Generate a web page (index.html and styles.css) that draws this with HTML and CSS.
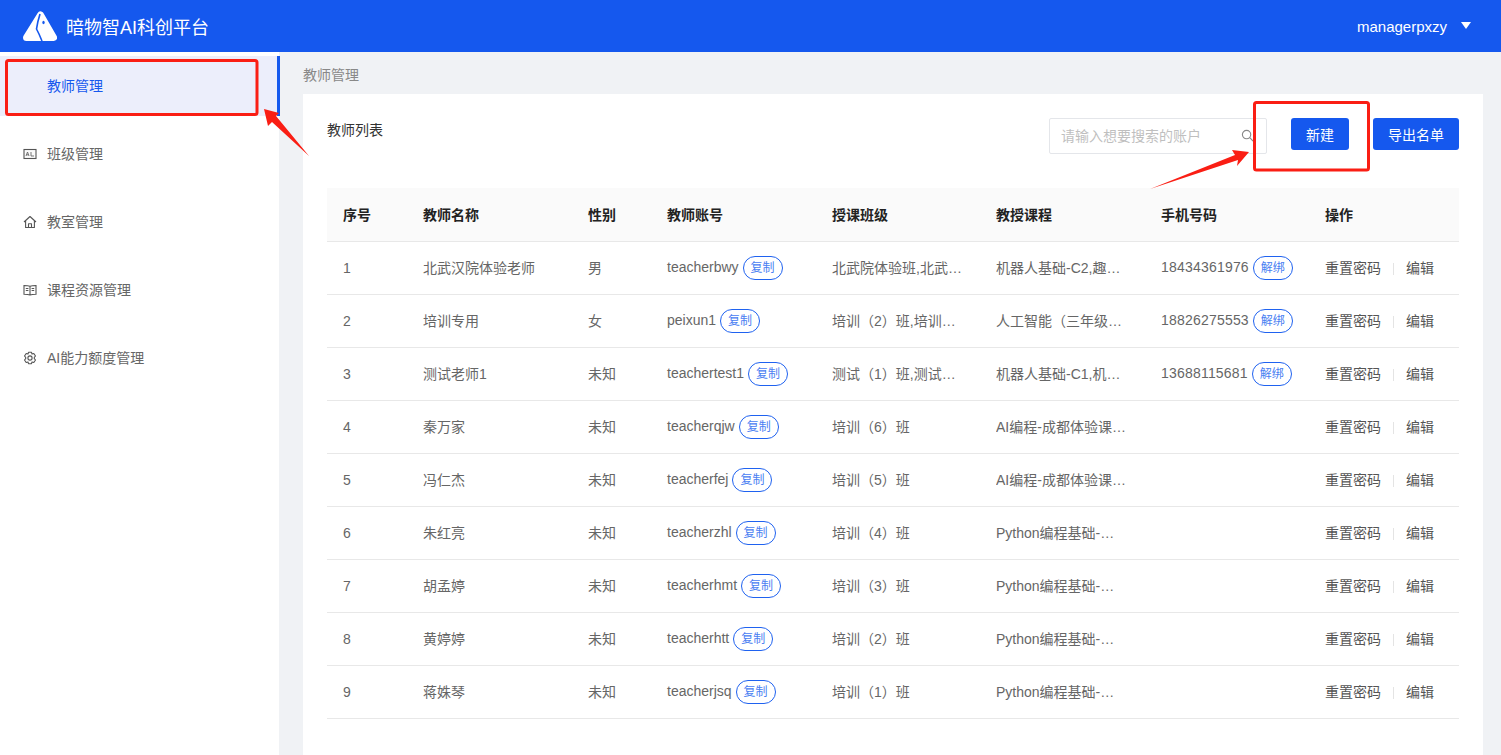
FILE: index.html
```html
<!DOCTYPE html>
<html lang="zh-CN">
<head>
    <meta charset="UTF-8">
    <title>暗物智AI科创平台</title>
    <link rel="stylesheet" href="styles.css">
</head>
<body>

    <!-- Header -->
    <header class="topbar">
        <div class="brand">
            <svg class="logo" viewBox="0 0 34 30">
                <path d="M17.500 4 30.500 26.500H3.500Z" fill="#fff" stroke="#fff" stroke-width="7" stroke-linejoin="round"/>
                <path d="M17 3 14.800 11 13.500 18 16 23 19 30" fill="none" stroke="#1558ee" stroke-width="1.600"/>
                <ellipse cx="20.500" cy="11.500" rx="1.200" ry="1.800" fill="#1558ee"/>
            </svg>
            <span class="brand-name">暗物智AI科创平台</span>
        </div>
        <div class="user">
            <span>managerpxzy</span>
            <i class="caret"></i>
        </div>
    </header>

    <div class="main">
        <!-- Sidebar -->
        <nav class="sidebar">
            <a class="menu-item active">教师管理</a>
            <a class="menu-item">
                <svg class="menu-icon" viewBox="0 0 14 14"><rect x="1" y="2.500" width="12" height="9" fill="#fafafa" stroke="#555" stroke-width="1.100"/><path d="M3 9 4.500 5 6 9M3.600 7.800H5.400M8 5V9H11" fill="none" stroke="#666" stroke-width=".9"/></svg>
                班级管理
            </a>
            <a class="menu-item">
                <svg class="menu-icon" viewBox="0 0 14 14"><path d="M1 7 7 1.500 13 7M2.600 6V12.500H11.400V6M5.500 12.500V8.800H8.500V12.500" fill="none" stroke="#555" stroke-width="1.100" stroke-linejoin="round"/></svg>
                教室管理
            </a>
            <a class="menu-item">
                <svg class="menu-icon" viewBox="0 0 14 14"><path d="M7 3.200C5.500 2.600 3 2.500 1 2.500V11.200C3 11.200 5.500 11.300 7 12 8.500 11.300 11 11.200 13 11.200V2.500C11 2.500 8.500 2.600 7 3.200ZM7 3.200V12M2.800 5.500H5.400M2.800 7.500H5.400M8.600 5.500H11.200M8.600 7.500H11.200" fill="none" stroke="#555" stroke-width="1.100"/></svg>
                课程资源管理
            </a>
            <a class="menu-item">
                <svg class="menu-icon" viewBox="0 0 14 14"><path d="M5.500 1.300H8.500L9 3 10.800 2.500 12.500 5 11.300 6.300V7.700L12.500 9 10.800 11.500 9 11 8.500 12.700H5.500L5 11 3.200 11.500 1.500 9 2.700 7.700V6.300L1.500 5 3.200 2.500 5 3Z" fill="none" stroke="#555" stroke-width="1.100" stroke-linejoin="round"/><circle cx="7" cy="7" r="2.100" fill="none" stroke="#555" stroke-width="1.100"/></svg>
                AI能力额度管理
            </a>
        </nav>

        <!-- Content -->
        <section class="content">
            <div class="breadcrumb">教师管理</div>
            <div class="card">
                <div class="toolbar">
                    <h2 class="card-title">教师列表</h2>
                    <div class="actions">
                        <div class="search">
                            <span class="placeholder">请输入想要搜索的账户</span>
                            <svg class="search-icon" viewBox="0 0 14 14"><circle cx="6" cy="6" r="4.500" fill="none" stroke="#888" stroke-width="1.200"/><path d="M9.400 9.400 13 13" stroke="#888" stroke-width="1.200"/></svg>
                        </div>
                        <button class="btn btn-new">新建</button>
                        <button class="btn">导出名单</button>
                    </div>
                </div>

                <table class="teacher-table">
                    <thead>
                        <tr>
                            <th class="col-no">序号</th>
                            <th class="col-name">教师名称</th>
                            <th class="col-sex">性别</th>
                            <th class="col-account">教师账号</th>
                            <th class="col-class">授课班级</th>
                            <th class="col-course">教授课程</th>
                            <th class="col-phone">手机号码</th>
                            <th>操作</th>
                        </tr>
                    </thead>
                    <tbody>
                        <tr>
                            <td>1</td><td>北武汉院体验老师</td><td>男</td>
                            <td class="latin">teacherbwy<span class="pill">复制</span></td>
                            <td><span class="clip">北武院体验班,北武院体验班</span></td>
                            <td><span class="clip">机器人基础-C2,趣味编程</span></td>
                            <td class="latin phone">18434361976<span class="pill">解绑</span></td>
                            <td class="ops"><a>重置密码</a><i class="sep"></i><a>编辑</a></td>
                        </tr>
                        <tr>
                            <td>2</td><td>培训专用</td><td>女</td>
                            <td class="latin">peixun1<span class="pill">复制</span></td>
                            <td><span class="clip">培训（2）班,培训（1）班</span></td>
                            <td><span class="clip">人工智能（三年级）上册</span></td>
                            <td class="latin phone">18826275553<span class="pill">解绑</span></td>
                            <td class="ops"><a>重置密码</a><i class="sep"></i><a>编辑</a></td>
                        </tr>
                        <tr>
                            <td>3</td><td>测试老师1</td><td>未知</td>
                            <td class="latin">teachertest1<span class="pill">复制</span></td>
                            <td><span class="clip">测试（1）班,测试（2）班</span></td>
                            <td><span class="clip">机器人基础-C1,机器人基础</span></td>
                            <td class="latin phone">13688115681<span class="pill">解绑</span></td>
                            <td class="ops"><a>重置密码</a><i class="sep"></i><a>编辑</a></td>
                        </tr>
                        <tr>
                            <td>4</td><td>秦万家</td><td>未知</td>
                            <td class="latin">teacherqjw<span class="pill">复制</span></td>
                            <td>培训（6）班</td>
                            <td><span class="clip">AI编程-成都体验课程内容</span></td>
                            <td></td>
                            <td class="ops"><a>重置密码</a><i class="sep"></i><a>编辑</a></td>
                        </tr>
                        <tr>
                            <td>5</td><td>冯仁杰</td><td>未知</td>
                            <td class="latin">teacherfej<span class="pill">复制</span></td>
                            <td>培训（5）班</td>
                            <td><span class="clip">AI编程-成都体验课程内容</span></td>
                            <td></td>
                            <td class="ops"><a>重置密码</a><i class="sep"></i><a>编辑</a></td>
                        </tr>
                        <tr>
                            <td>6</td><td>朱红亮</td><td>未知</td>
                            <td class="latin">teacherzhl<span class="pill">复制</span></td>
                            <td>培训（4）班</td>
                            <td><span class="clip">Python编程基础-入门课程</span></td>
                            <td></td>
                            <td class="ops"><a>重置密码</a><i class="sep"></i><a>编辑</a></td>
                        </tr>
                        <tr>
                            <td>7</td><td>胡孟婷</td><td>未知</td>
                            <td class="latin">teacherhmt<span class="pill">复制</span></td>
                            <td>培训（3）班</td>
                            <td><span class="clip">Python编程基础-入门课程</span></td>
                            <td></td>
                            <td class="ops"><a>重置密码</a><i class="sep"></i><a>编辑</a></td>
                        </tr>
                        <tr>
                            <td>8</td><td>黄婷婷</td><td>未知</td>
                            <td class="latin">teacherhtt<span class="pill">复制</span></td>
                            <td>培训（2）班</td>
                            <td><span class="clip">Python编程基础-入门课程</span></td>
                            <td></td>
                            <td class="ops"><a>重置密码</a><i class="sep"></i><a>编辑</a></td>
                        </tr>
                        <tr>
                            <td>9</td><td>蒋姝琴</td><td>未知</td>
                            <td class="latin">teacherjsq<span class="pill">复制</span></td>
                            <td>培训（1）班</td>
                            <td><span class="clip">Python编程基础-入门课程</span></td>
                            <td></td>
                            <td class="ops"><a>重置密码</a><i class="sep"></i><a>编辑</a></td>
                        </tr>
                    </tbody>
                </table>
            </div>
        </section>
    </div>

    <!-- Red annotations drawn over the screenshot -->
    <svg class="marks" viewBox="0 0 1501 755" width="1501" height="755">
        <rect x="6.500" y="60.500" width="250.500" height="54" rx="2" fill="none" stroke="#fa1e14" stroke-width="3"/>
        <rect x="1254.500" y="102.500" width="114" height="67.500" rx="2" fill="none" stroke="#fa1e14" stroke-width="3"/>
        <path fill="#fa1e14" d="M264 109 279 113 276 116 309 156 272 122 268 126Z"/>
        <path fill="#fa1e14" d="M1249 152 1232 150 1235 155 1150 189 1238 160 1237 166Z"/>
    </svg>

</body>
</html>
```

FILE: styles.css
```css
* {
    margin: 0;
    padding: 0;
    box-sizing: border-box;
}

body {
    position: relative;
    height: 755px;
    overflow: hidden;
    background: #f0f2f5;
    font-family: "Liberation Sans", "Noto Sans CJK SC", sans-serif;
    font-size: 14px;
    color: #666;
}

/* Header */
.topbar {
    display: flex;
    justify-content: space-between;
    align-items: center;
    height: 52px;
    padding: 0 30px 0 23px;
    background: #1558ee;
    color: #fff;
}

.brand {
    display: flex;
    align-items: center;
    gap: 9px;
}

.logo {
    width: 34px;
    height: 30px;
}

.brand-name {
    font-size: 18px;
}

.user {
    display: flex;
    align-items: center;
    gap: 14px;
    font-size: 15px;
}

.caret {
    width: 0;
    height: 0;
    margin-bottom: 2px;
    border-left: 5px solid transparent;
    border-right: 5px solid transparent;
    border-top: 7px solid #fff;
}

.main {
    display: flex;
    height: 703px;
}

/* Sidebar */
.sidebar {
    width: 279px;
    flex-shrink: 0;
    padding-top: 4px;
    background: #fff;
}

.menu-item {
    position: relative;
    display: flex;
    align-items: center;
    height: 60px;
    margin-bottom: 8px;
    padding: 0 0 2px 47px;
    color: #666;
}

.menu-item.active {
    margin-right: -1px;
    background: #eceefb;
    border-right: 3px solid #1558ee;
    color: #1558ee;
}

.menu-icon {
    position: absolute;
    left: 23px;
    top: 23px;
    width: 14px;
    height: 14px;
}

/* Content */
.content {
    flex: 1;
    padding: 0 18px 0 24px;
}

.breadcrumb {
    height: 42px;
    padding-top: 14px;
    line-height: 18px;
    color: #888;
}

.card {
    height: 661px;
    padding: 0 24px;
    background: #fff;
}

.toolbar {
    display: flex;
    justify-content: space-between;
    height: 94px;
    padding-top: 24px;
}

.card-title {
    font-size: 14px;
    font-weight: normal;
    line-height: 24px;
    color: #333;
}

.actions {
    display: flex;
    align-items: flex-start;
}

.search {
    display: flex;
    justify-content: space-between;
    align-items: center;
    width: 218px;
    height: 36px;
    margin-right: 24px;
    padding: 0 12px 2px 11px;
    border: 1px solid #e4e6ea;
    border-radius: 2px;
}

.placeholder {
    color: #bfbfbf;
}

.search-icon {
    width: 13px;
    height: 13px;
}

.btn {
    width: 86px;
    height: 32px;
    border: none;
    border-radius: 3px;
    background: #1558ee;
    color: #fff;
    font: inherit;
}

.btn-new {
    width: 58px;
    margin-right: 24px;
}

/* Table */
.teacher-table {
    width: 1132px;
    table-layout: fixed;
    border-collapse: collapse;
}

.teacher-table th {
    height: 53px;
    padding-left: 16px;
    background: #fafafa;
    border-bottom: 1px solid #e8e8e8;
    text-align: left;
    font-weight: bold;
    color: #222;
}

.teacher-table td {
    height: 53px;
    padding: 0 0 2px 16px;
    border-bottom: 1px solid #e8e8e8;
    white-space: nowrap;
}

.teacher-table td:first-child,
.teacher-table td.latin {
    padding-bottom: 0;
}

.phone {
    letter-spacing: .2px;
}

.col-no { width: 80px; }
.col-name { width: 165px; }
.col-sex { width: 79px; }
.col-account { width: 165px; }
.col-class { width: 164px; }
.col-course { width: 165px; }
.col-phone { width: 164px; }

.clip {
    display: block;
    width: 130px;
    overflow: hidden;
    text-overflow: ellipsis;
}

.pill {
    display: inline-block;
    width: 40px;
    height: 24px;
    margin-left: 4px;
    border: 1px solid #1f62f0;
    border-radius: 12px;
    text-align: center;
    font-size: 12px;
    letter-spacing: 0;
    line-height: 22px;
    color: #4a80f2;
    vertical-align: middle;
}

.ops a {
    color: #555;
}

.sep {
    display: inline-block;
    width: 1px;
    height: 12px;
    margin: 0 12px;
    background: #e4e4e4;
    vertical-align: middle;
}

/* Annotations */
.marks {
    position: absolute;
    left: 0;
    top: 0;
    pointer-events: none;
}
```
